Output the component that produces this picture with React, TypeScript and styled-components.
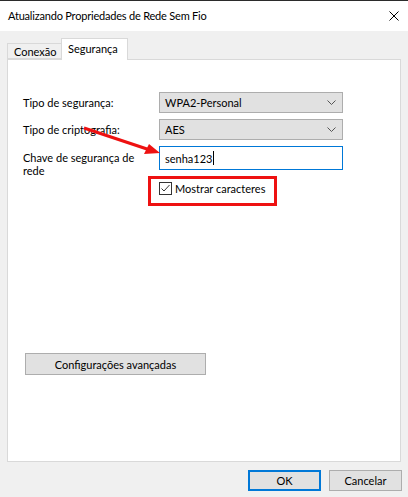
import React from 'react';
import styled, { createGlobalStyle } from 'styled-components';

const GlobalStyle = createGlobalStyle`
  html, body {
    margin: 0;
    padding: 0;
    background: #f0f0f0;
  }
  body {
    font-family: Lato, "Liberation Sans", sans-serif;
    font-size: 11px;
    color: #000;
  }
`;

const Window = styled.div`
  width: 408px;
  height: 497px;
  display: flex;
  flex-direction: column;
  background: #f0f0f0;
  overflow: hidden;
  box-sizing: border-box;
`;

const TitleBar = styled.div`
  height: 31px;
  flex: none;
  display: flex;
  align-items: center;
  justify-content: space-between;
  background: #fff;
  border-top: 1px solid #2b2b2b;
  box-sizing: border-box;
  padding: 0 9px 1px 8px;
`;

const Title = styled.span`
  font-size: 11px;
  letter-spacing: -0.2px;
`;

const CloseIcon = styled.svg`
  width: 10px;
  height: 10px;
`;

const Body = styled.div`
  flex: 1;
  display: flex;
  flex-direction: column;
  padding: 7px 7px 0 7px;
`;

const TabStrip = styled.div`
  display: flex;
  align-items: flex-end;
  height: 21px;
  position: relative;
  z-index: 1;
`;

const Tab = styled.div<{ $active?: boolean }>`
  box-sizing: border-box;
  display: flex;
  align-items: center;
  border: 1px solid #d9d9d9;
  border-bottom: ${(p) => (p.$active ? 'none' : '1px solid #d9d9d9')};
  margin-left: ${(p) => (p.$active ? '-1px' : '0')};
  background: ${(p) => (p.$active ? '#fff' : '#f0f0f0')};
  height: ${(p) => (p.$active ? '22px' : '16px')};
  margin-bottom: ${(p) => (p.$active ? '-1px' : '0')};
  padding: ${(p) => (p.$active ? '0 6px 3px 6px' : '0 6px 0 6px')};
  width: ${(p) => (p.$active ? '67px' : '55px')};
  white-space: nowrap;
`;

const Panel = styled.div`
  position: relative;
  box-sizing: border-box;
  height: 403px;
  background: #fff;
  border: 1px solid #d9d9d9;
  padding: 32px 0 0 15px;
  display: flex;
  flex-direction: column;
`;

const Form = styled.div`
  display: grid;
  grid-template-columns: 136px 184px;
  row-gap: 6px;
`;

const Label = styled.div<{ $top?: boolean }>`
  align-self: ${(p) => (p.$top ? 'start' : 'center')};
  height: ${(p) => (p.$top ? '24px' : 'auto')};
  padding-top: ${(p) => (p.$top ? '5px' : '0')};
  box-sizing: border-box;
  line-height: 13px;
`;

const Select = styled.div`
  box-sizing: border-box;
  height: 21px;
  display: flex;
  align-items: center;
  justify-content: space-between;
  background: #e1e1e1;
  border: 1px solid #adadad;
  padding: 0 6px 0 5px;
`;

const Chevron = styled.svg`
  width: 9px;
  height: 5px;
`;

const TextInput = styled.div`
  box-sizing: border-box;
  height: 24px;
  display: flex;
  align-items: center;
  background: #fff;
  border: 1px solid #0078d7;
  padding: 0 5px;
`;

const Caret = styled.span`
  display: inline-block;
  width: 1px;
  height: 14px;
  background: #000;
  margin-left: 1px;
`;

const CheckRow = styled.label`
  grid-column: 2;
  margin-top: 5px;
  display: flex;
  align-items: center;
  gap: 3px;
  width: fit-content;
  position: relative;
  height: 15px;

  &::after {
    content: '';
    position: absolute;
    left: -11px;
    top: -5px;
    width: 129px;
    height: 30px;
    box-sizing: border-box;
    border: 3px solid #ee1111;
    pointer-events: none;
  }
`;

const CheckBox = styled.span`
  box-sizing: border-box;
  width: 13px;
  height: 13px;
  border: 1px solid #333;
  background: #fff;
  display: flex;
  align-items: center;
  justify-content: center;
`;

const Arrow = styled.svg`
  position: absolute;
  left: 70px;
  top: 60px;
  width: 100px;
  height: 40px;
  overflow: visible;
  pointer-events: none;
`;

const WinButton = styled.button<{ $default?: boolean }>`
  box-sizing: border-box;
  font-family: inherit;
  font-size: 11px;
  color: #000;
  background: #e1e1e1;
  border: ${(p) => (p.$default ? '2px solid #0078d7' : '1px solid #adadad')};
  height: 21px;
  padding: 0;
  margin: 0;
  display: flex;
  align-items: center;
  justify-content: center;
`;

const AdvancedButton = styled(WinButton)`
  width: 181px;
  height: 22px;
  margin-top: 157px;
  margin-left: 2px;
`;

const Footer = styled.div`
  display: flex;
  justify-content: flex-end;
  gap: 8px;
  padding: 8px 0 0 0;
  margin-right: -1px;
`;

const DialogButton = styled(WinButton)`
  width: 73px;
`;

const App: React.FC = () => {
  return (
    <>
      <GlobalStyle />
      <Window>
        <TitleBar>
          <Title>Atualizando Propriedades de Rede Sem Fio</Title>
          <CloseIcon viewBox="0 0 10 10">
            <path d="M0.5 0.5 L9.5 9.5 M9.5 0.5 L0.5 9.5" stroke="#000" strokeWidth="1" fill="none" />
          </CloseIcon>
        </TitleBar>
        <Body>
          <TabStrip>
            <Tab>Conexão</Tab>
            <Tab $active>Segurança</Tab>
          </TabStrip>
          <Panel>
            <Form>
              <Label>Tipo de segurança:</Label>
              <Select>
                WPA2-Personal
                <Chevron viewBox="0 0 9 5">
                  <path d="M0.5 0.5 L4.5 4.5 L8.5 0.5" stroke="#555" strokeWidth="1" fill="none" />
                </Chevron>
              </Select>
              <Label>Tipo de criptografia:</Label>
              <Select>
                AES
                <Chevron viewBox="0 0 9 5">
                  <path d="M0.5 0.5 L4.5 4.5 L8.5 0.5" stroke="#555" strokeWidth="1" fill="none" />
                </Chevron>
              </Select>
              <Label $top>
                Chave de segurança de
                <br />
                rede
              </Label>
              <TextInput>
                senha123
                <Caret />
              </TextInput>
              <CheckRow>
                <CheckBox>
                  <svg width="11" height="11" viewBox="0 0 11 11">
                    <path d="M1.5 5.5 L4 8 L9.5 2" stroke="#333" strokeWidth="1" fill="none" />
                  </svg>
                </CheckBox>
                Mostrar caracteres
              </CheckRow>
            </Form>
            <AdvancedButton>Configurações avançadas</AdvancedButton>
            <Arrow viewBox="0 0 100 40">
              <line x1="6" y1="8" x2="72" y2="30" stroke="#ee1111" strokeWidth="3" />
              <polygon points="82,33 66,34 71,24" fill="#ee1111" />
            </Arrow>
          </Panel>
          <Footer>
            <DialogButton $default>OK</DialogButton>
            <DialogButton>Cancelar</DialogButton>
          </Footer>
        </Body>
      </Window>
    </>
  );
};

export default App;
